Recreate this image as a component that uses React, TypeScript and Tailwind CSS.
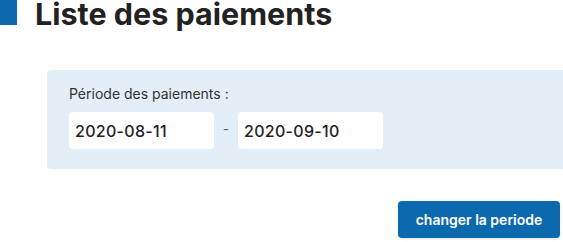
export default function App() {
  return (
    <div className="h-[242px] w-[563px] overflow-hidden bg-white font-['Inter',sans-serif] text-[#222]">
      <div className="flex items-start gap-[18px]">
        <div className="h-[25px] w-[17px] bg-[#0a6aad]" />
        <h1 className="-mt-[4px] text-[30.5px] font-bold leading-[36px] text-[#222]">Liste des paiements</h1>
      </div>
      <div className="ml-[47px] mt-[38px] h-[99px] rounded-l-[4px] bg-[#e4eef7] pl-[22px] pt-[14px]">
        <p className="text-[14px] leading-[20px] text-[#333]">Période des paiements :</p>
        <div className="mt-[8px] flex items-center">
          <input
            readOnly
            value="2020-08-11"
            className="h-[37px] w-[145px] rounded-[4px] bg-white px-[6px] text-[16px] font-medium tracking-[0.3px] text-[#222] outline-none"
          />
          <span className="w-[24px] pb-[4px] text-center text-[14px] text-[#666]">-</span>
          <input
            readOnly
            value="2020-09-10"
            className="h-[37px] w-[145px] rounded-[4px] bg-white px-[6px] text-[16px] font-medium tracking-[0.3px] text-[#222] outline-none"
          />
        </div>
      </div>
      <div className="mt-[32px] flex justify-end pr-[3px]">
        <button className="h-[37px] w-[162px] rounded-[4px] bg-[#0a6aad] text-[14px] font-semibold text-white shadow-sm">
          changer la periode
        </button>
      </div>
    </div>
  );
}
